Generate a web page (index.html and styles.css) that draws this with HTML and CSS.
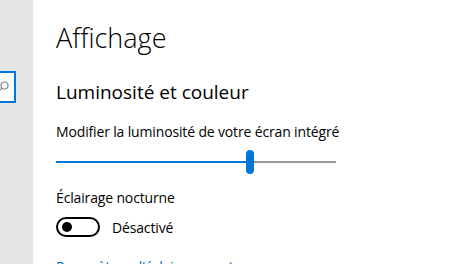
FILE: index.html
```html
<!DOCTYPE html>
<html lang="fr">
<head>
<meta charset="utf-8">
<link rel="stylesheet" href="styles.css">
</head>
<body>
<div class="app">
  <aside class="sidebar">
    <div class="search">
      <svg class="search-icon" width="16" height="16" viewBox="0 0 16 16">
        <circle cx="11.5" cy="4.5" r="3.5" fill="none" stroke="#8a8a8a" stroke-width="1.2"/>
        <line x1="9" y1="7" x2="3" y2="13" stroke="#8a8a8a" stroke-width="1.2"/>
      </svg>
    </div>
  </aside>
  <main class="content">
    <h1 class="title">Affichage</h1>
    <h2 class="subtitle">Luminosité et couleur</h2>
    <p class="label">Modifier la luminosité de votre écran intégré</p>
    <div class="slider">
      <div class="track-fill"></div>
      <div class="thumb"></div>
      <div class="track-rest"></div>
    </div>
    <p class="label night">Éclairage nocturne</p>
    <div class="toggle-row">
      <span class="toggle"><span class="knob"></span></span>
      <span class="toggle-text">Désactivé</span>
    </div>
    <a class="link" href="#">Paramètres d'éclairage nocturne</a>
  </main>
</div>
</body>
</html>
```
FILE: styles.css
```css
html, body {
  margin: 0;
  padding: 0;
  background: #ffffff;
  overflow: hidden;
}
body {
  font-family: "Open Sans", "Noto Sans", sans-serif;
  color: #000000;
}
.app {
  display: flex;
  width: 464px;
  height: 264px;
  overflow: hidden;
}
.sidebar {
  flex: 0 0 33px;
  background: #e6e6e6;
  overflow: hidden;
}
.search {
  margin-top: 71px;
  margin-left: -184px;
  width: 200px;
  height: 32px;
  box-sizing: border-box;
  border: 2px solid #0078d7;
  background: #ffffff;
  display: flex;
  align-items: flex-start;
  justify-content: flex-end;
}
.search-icon {
  margin-top: 8px;
  margin-right: 5px;
}
.content {
  flex: 1;
  padding: 18px 0 0 23px;
}
.title {
  margin: 0;
  font-size: 27px;
  font-weight: 300;
  line-height: 40px;
}
.subtitle {
  margin: 20px 0 0;
  font-size: 19px;
  font-weight: 400;
  line-height: 28px;
}
.label {
  margin: 16px 0 0;
  font-size: 14px;
  letter-spacing: -0.15px;
  line-height: 20px;
}
.slider {
  margin-top: 8px;
  width: 280px;
  height: 24px;
  display: flex;
  align-items: center;
}
.track-fill {
  width: 190px;
  height: 2px;
  background: #0078d7;
}
.thumb {
  width: 8px;
  height: 24px;
  border-radius: 4px;
  background: #0078d7;
}
.track-rest {
  flex: 1;
  height: 2px;
  background: #999999;
}
.night {
  margin-top: 14px;
}
.toggle-row {
  margin-top: 9px;
  display: flex;
  align-items: center;
  height: 20px;
}
.toggle {
  width: 44px;
  height: 20px;
  box-sizing: border-box;
  border: 2px solid #000000;
  border-radius: 10px;
  display: flex;
  align-items: center;
  padding-left: 4px;
}
.knob {
  width: 10px;
  height: 10px;
  border-radius: 50%;
  background: #000000;
}
.toggle-text {
  margin-left: 12px;
  font-size: 14px;
  letter-spacing: -0.15px;
}
.link {
  display: block;
  margin-top: 20px;
  font-size: 14px;
  letter-spacing: -0.15px;
  line-height: 20px;
  color: #0067c0;
  text-decoration: none;
}
```
